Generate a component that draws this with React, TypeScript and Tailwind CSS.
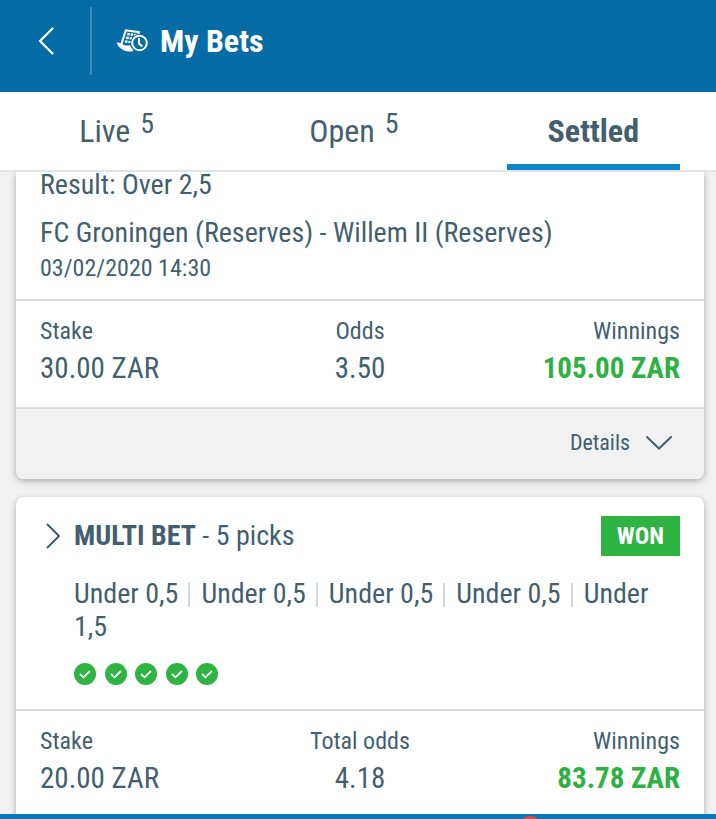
import { Fragment } from 'react'

const tabs = [
  { label: 'Live', count: 5 },
  { label: 'Open', count: 5 },
  { label: 'Settled', active: true },
]

const picks = ['Under 0,5', 'Under 0,5', 'Under 0,5', 'Under 0,5', 'Under 1,5']

function BetsIcon() {
  return (
    <svg viewBox="0 0 32 24" className="h-6 w-8" fill="none" aria-hidden="true">
      {/* slip */}
      <path d="M5.500 15 L9.800 1.300 L23 3.200 L22 7" stroke="#fff" strokeWidth="2" />
      <g stroke="#fff" strokeWidth="2.400">
        <path d="M11.300 5 L21 6.300" strokeDasharray="2.500 0.900" />
        <path d="M10.200 8.700 L17 9.600" strokeDasharray="2.500 0.900" />
        <path d="M9 12.400 L15 13.200" strokeDasharray="2.500 0.900" />
      </g>
      {/* curled end of the slip */}
      <path d="M0.500 13.300 L5.500 14.200 C7.500 16.500 10.500 16.800 14 16.300 L17.500 22 C10 24 3 20.500 0.500 13.300 Z" fill="#fff" />
      <circle cx="23.500" cy="14" r="9.200" fill="#066ca6" />
      <circle cx="23.500" cy="14" r="7.300" stroke="#fff" strokeWidth="2" />
      <path d="M23 9 V14.500 L26.300 17.500" stroke="#fff" strokeWidth="2" />
    </svg>
  )
}

function CheckBadge() {
  return (
    <svg viewBox="0 0 22 22" className="size-[22px]" fill="none" aria-hidden="true">
      <circle cx="11" cy="11" r="11" fill="#2db443" />
      <path d="M6 11 L9.500 14.300 L16 8" stroke="#fff" strokeWidth="1.800" />
    </svg>
  )
}

function Stats({ stake, oddsLabel, odds, winnings }: { stake: string; oddsLabel: string; odds: string; winnings: string }) {
  return (
    <dl className="grid grid-cols-3 border-t-2 border-[#d9dcde] px-6 pt-4 pb-5">
      <div className="flex flex-col gap-1">
        <dt className="text-2xl leading-7">Stake</dt>
        <dd className="text-[29px] leading-[38px]">{stake}</dd>
      </div>
      <div className="flex flex-col gap-1 text-center">
        <dt className="text-2xl leading-7">{oddsLabel}</dt>
        <dd className="text-[29px] leading-[38px]">{odds}</dd>
      </div>
      <div className="flex flex-col gap-1 text-right">
        <dt className="text-2xl leading-7">Winnings</dt>
        <dd className="text-[29px] leading-[38px] font-bold text-[#2fb044]">{winnings}</dd>
      </div>
    </dl>
  )
}

export default function App() {
  return (
    <div className="flex h-screen flex-col overflow-hidden bg-[#f1f1f1] font-['Roboto_Condensed',Roboto,sans-serif] text-[#435f6f]">
      <header className="flex shrink-0 items-center bg-[#066ca6] pt-[7px] pb-[17px] text-white">
        <button type="button" aria-label="Back" className="flex h-[68px] w-[92px] items-center justify-center border-r-2 border-[#3a8abb] pl-0.5">
          <svg viewBox="0 0 16 28" className="h-7 w-4" fill="none" stroke="currentColor" strokeWidth="2.200" strokeLinecap="round">
            <path d="M14.500 1.500 L2 14 L14.500 26.500" />
          </svg>
        </button>
        <div className="flex items-center gap-3 pl-6">
          <BetsIcon />
          <h1 className="text-[32px] leading-9 font-bold">My Bets</h1>
        </div>
      </header>

      <nav className="grid shrink-0 grid-cols-3 border-b-2 border-[#e3e3e3] bg-white pr-1">
        {tabs.map((tab) => (
          <a
            key={tab.label}
            href="#"
            className={
              tab.active
                ? 'mx-8 flex h-[78px] items-center justify-center border-b-6 border-[#0d86cc] pt-1.5 text-[32px] font-bold'
                : 'mx-8 flex h-[78px] items-center justify-center gap-2.5 border-b-6 border-transparent pt-1.5 pr-1 text-[32px]'
            }
          >
            {tab.label}
            {tab.count && <span className="pb-3.5 text-[28px]">{tab.count}</span>}
          </a>
        ))}
      </nav>

      <main className="min-h-0 flex-1 overflow-hidden pr-3 pl-4">
        <article className="overflow-hidden rounded-b-lg bg-white shadow-[0_2px_6px_rgba(0,0,0,0.3)]">
          <div className="px-6 pb-4">
            <p className="text-[28px] leading-[26px]">Result: Over 2,5</p>
            <p className="mt-[18px] text-[28px] leading-[33px]">FC Groningen (Reserves) - Willem II (Reserves)</p>
            <p className="mt-1 text-2xl leading-[30px]">03/02/2020 14:30</p>
          </div>
          <Stats stake="30.00 ZAR" oddsLabel="Odds" odds="3.50" winnings="105.00 ZAR" />
          <div className="flex justify-end border-t-2 border-[#d9dcde] bg-[#f1f1f1] px-8 pt-[18px] pb-5">
            <button type="button" className="flex items-center gap-4 text-[22px] leading-8">
              Details
              <svg viewBox="0 0 26 14" className="h-3.5 w-[26px]" fill="none" stroke="currentColor" strokeWidth="2" strokeLinecap="round">
                <path d="M1 1 L13 12.500 L25 1" />
              </svg>
            </button>
          </div>
        </article>

        <article className="mt-[18px] rounded-t-lg bg-white shadow-[0_2px_6px_rgba(0,0,0,0.3)]">
          <div className="px-6 pt-[19px] pb-6">
            <div className="flex items-center">
              <button type="button" aria-label="Show picks" className="flex w-[34px] pl-1.5">
                <svg viewBox="0 0 14 26" className="h-[26px] w-3.5" fill="none" stroke="currentColor" strokeWidth="2">
                  <path d="M1 1 L13 13 L1 25" />
                </svg>
              </button>
              <h2 className="flex-1 text-[28px] leading-10">
                <b>MULTI BET</b> - 5 picks
              </h2>
              <span className="bg-[#2db443] px-4 text-2xl leading-10 font-bold text-white">WON</span>
            </div>
            <div className="pl-[34px]">
              <p className="mt-[21px] text-[28px] leading-[33px]">
                {picks.map((pick, i) => (
                  <Fragment key={i}>
                    {i > 0 && <span className="mr-[11px] ml-2.5 inline-block h-6 w-0.5 bg-[#d3d7d9] align-[-4px]" />}
                    {pick}
                  </Fragment>
                ))}
              </p>
              <div className="mt-5 flex w-36 justify-between">
                {picks.map((_, i) => (
                  <CheckBadge key={i} />
                ))}
              </div>
            </div>
          </div>
          <Stats stake="20.00 ZAR" oddsLabel="Total odds" odds="4.18" winnings="83.78 ZAR" />
        </article>
      </main>

      <footer className="relative h-[5px] shrink-0 bg-[#0678ba]">
        <span className="absolute top-0.5 left-[74%] size-6 -translate-x-1/2 rounded-full bg-[#ee4540]" />
      </footer>
    </div>
  )
}
